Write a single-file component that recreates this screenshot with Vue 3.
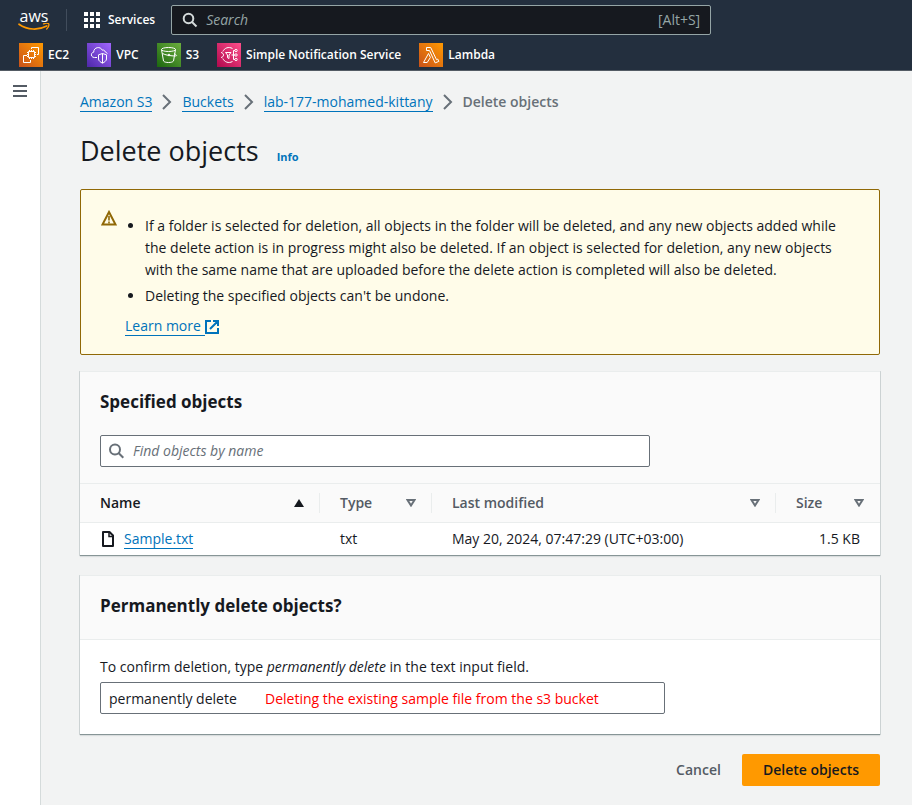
<script setup>
import { ref } from 'vue'

const navQuery = ref('')
const objectQuery = ref('')
const confirmation = ref('permanently delete')

const favorites = [
  { id: 'ec2', label: 'EC2' },
  { id: 'vpc', label: 'VPC' },
  { id: 's3', label: 'S3' },
  { id: 'sns', label: 'Simple Notification Service' },
  { id: 'lambda', label: 'Lambda' },
]

const crumbs = ['Amazon S3', 'Buckets', 'lab-177-mohamed-kittany']

const columns = [
  { id: 'name', label: 'Name', sorted: true },
  { id: 'type', label: 'Type' },
  { id: 'modified', label: 'Last modified' },
  { id: 'size', label: 'Size' },
]

const objects = [
  { name: 'Sample.txt', type: 'txt', modified: 'May 20, 2024, 07:47:29 (UTC+03:00)', size: '1.5 KB' },
]
</script>

<template>
  <div class="page">
    <header class="topnav">
      <div class="topnav-main">
        <a class="logo" href="#" aria-label="AWS home">
          <span class="logo-word">aws</span>
          <svg class="logo-smile" width="32" height="8" viewBox="0 0 32 8" aria-hidden="true">
            <path d="M1 1.2c8.500 6 19.500 6.200 27.800 1.800" fill="none" stroke="#f90" stroke-width="1.700" stroke-linecap="round" />
            <path d="M25.500.9c2-.9 4.600-.8 5.200-.1.400 1-.3 3.600-2 5.200" fill="none" stroke="#f90" stroke-width="1.300" stroke-linecap="round" stroke-linejoin="round" />
          </svg>
        </a>
        <button class="services" type="button">
          <svg width="16" height="16" viewBox="0 0 16 16" fill="#fff" aria-hidden="true">
            <path d="M0 0h4v4H0zM6 0h4v4H6zM12 0h4v4h-4zM0 6h4v4H0zM6 6h4v4H6zM12 6h4v4h-4zM0 12h4v4H0zM6 12h4v4H6zM12 12h4v4h-4z" />
          </svg>
          <span>Services</span>
        </button>
        <label class="nav-search">
          <svg width="16" height="16" viewBox="0 0 16 16" fill="none" stroke="#d5dbdb" stroke-width="2" aria-hidden="true">
            <circle cx="6.500" cy="6.500" r="4.800" />
            <path d="M10 10l4.500 4.500" />
          </svg>
          <input v-model="navQuery" type="search" placeholder="Search" aria-label="Search" />
          <span class="shortcut">[Alt+S]</span>
        </label>
      </div>
      <nav class="favorites" aria-label="Favorites">
        <a v-for="item in favorites" :key="item.id" href="#" class="favorite">
          <span class="tile" :class="'tile-' + item.id">
            <svg width="24" height="24" viewBox="0 0 24 24" fill="none" stroke="#fff" stroke-width="1" aria-hidden="true">
              <template v-if="item.id === 'ec2'">
                <path d="M9.500 8.500h6v6h-6z" />
                <path d="M10.500 8.500V7M12.500 8.500V7M14.500 8.500V7M10.500 14.500V16M12.500 14.500V16M14.500 14.500V16M9.500 9.500H8M9.500 11.500H8M9.500 13.500H8M15.500 9.500H17M15.500 11.500H17M15.500 13.500H17" />
                <path d="M12.500 6V4.500h7v7H18M8 12.500H4.500v7h7V17" />
              </template>
              <template v-else-if="item.id === 'vpc'">
                <path d="M10 14.500H7.500c-4 0-4-5-.8-5.300C6.600 4 13.500 3 15.300 7.200c1.500-.6 2.700.4 2.800 1.700 1.200.2 1.900.9 2.100 1.800" />
                <path d="M15.500 10.500l4 1.300v4.200c0 1.700-2 3.200-4 4.200-2-1-4-2.500-4-4.200v-4.200zM15.500 10.500v9.500" />
              </template>
              <template v-else-if="item.id === 's3'">
                <ellipse cx="11.500" cy="6.500" rx="7" ry="2" />
                <path d="M4.500 6.500l2 11.500c1 2 9 2 10 0l2-11.500M5.500 10.500c3 1.500 6 2 9.500 2.300 3.500.3 5 .2 4.500-.6-.3-.5-1.500-1.200-2.500-1.700" />
                <circle cx="12" cy="12" r=".8" fill="#fff" />
              </template>
              <template v-else-if="item.id === 'sns'">
                <path d="M15.500 5.500C11.500 3.300 7.500 5 5.800 8.500M5.800 15.500c1.700 3.500 5.700 5.200 9.700 3" />
                <path d="M4 9.500c1.500.2 2.500 1.200 2.500 2.500S5.500 14.300 4 14.500M8.500 9.500h5.500l-2 2.500v3.500l-1.500-.8V12zM14.500 12H18M16.500 7.500v9M16.500 7.500H18M16.500 16.500H18" />
                <circle cx="19" cy="7.500" r="1.200" />
                <circle cx="19" cy="12" r="1.200" />
                <circle cx="19" cy="16.500" r="1.200" />
              </template>
              <path v-else d="M7.500 4.500h4.200l5.800 12.200 1.300-.6 1 2.300-3.600 1.500-5.700-12.400H7.500zM9.500 10.500l1.900 3.900-3.200 5.100H4.500z" stroke-linejoin="round" />
            </svg>
          </span>
          <span>{{ item.label }}</span>
        </a>
      </nav>
    </header>

    <div class="body">
      <aside class="rail">
        <button type="button" class="menu-button" aria-label="Open navigation">
          <svg width="14" height="12" viewBox="0 0 14 12" fill="#545b64" aria-hidden="true">
            <path d="M0 0h14v2H0zM0 5h14v2H0zM0 10h14v2H0z" />
          </svg>
        </button>
      </aside>

      <main class="content">
        <nav class="crumbs" aria-label="Breadcrumbs">
          <template v-for="crumb in crumbs" :key="crumb">
            <a class="link" href="#">{{ crumb }}</a>
            <svg width="10" height="16" viewBox="0 0 10 16" fill="none" stroke="#687078" stroke-width="2" aria-hidden="true">
              <path d="M1 1l7 7-7 7" />
            </svg>
          </template>
          <span class="current">Delete objects</span>
        </nav>

        <div class="title">
          <h1>Delete objects</h1>
          <a href="#" class="info">Info</a>
        </div>

        <section class="alert" aria-label="Warning">
          <svg class="alert-icon" width="16" height="16" viewBox="0 0 16 16" fill="none" stroke="#906806" stroke-width="2" aria-hidden="true">
            <path d="M8 2l6.500 12.500h-13z" />
            <path d="M8 6v4.500M8 11.500v2" stroke-width="1.600" />
          </svg>
          <div>
            <ul>
              <li>If a folder is selected for deletion, all objects in the folder will be deleted, and any new objects added while the delete action is in progress might also be deleted. If an object is selected for deletion, any new objects with the same name that are uploaded before the delete action is completed will also be deleted.</li>
              <li>Deleting the specified objects can't be undone.</li>
            </ul>
            <a class="learn" href="#">
              <span class="link">Learn more&nbsp;</span>
              <svg width="14" height="14" viewBox="0 0 14 14" fill="none" stroke="#0073bb" stroke-width="2" aria-hidden="true">
                <path d="M6 1H1v12h12V8M8 1h5v5M13 1L5 9" />
              </svg>
            </a>
          </div>
        </section>

        <section class="card">
          <div class="card-head">
            <h2>Specified objects</h2>
            <label class="filter">
              <svg width="16" height="16" viewBox="0 0 16 16" fill="none" stroke="#687078" stroke-width="2" aria-hidden="true">
                <circle cx="6" cy="6.500" r="5" />
                <path d="M9.500 10l4.800 4.800" />
              </svg>
              <input v-model="objectQuery" type="search" placeholder="Find objects by name" aria-label="Find objects by name" />
            </label>
          </div>
          <table>
            <colgroup>
              <col class="col-name" />
              <col class="col-type" />
              <col class="col-modified" />
              <col class="col-size" />
            </colgroup>
            <thead>
              <tr>
                <th v-for="col in columns" :key="col.id" scope="col" :class="{ sorted: col.sorted }">
                  <div class="th">
                    <span>{{ col.label }}</span>
                    <svg width="10" height="8" viewBox="0 0 10 8" aria-hidden="true">
                      <path v-if="col.sorted" d="M5 0l5 8H0z" fill="#16191f" />
                      <path v-else d="M1.500 1h7L5 6.500z" fill="none" stroke="#687078" stroke-width="2" />
                    </svg>
                  </div>
                </th>
              </tr>
            </thead>
            <tbody>
              <tr v-for="object in objects" :key="object.name">
                <td>
                  <div class="file">
                    <svg width="16" height="16" viewBox="0 0 16 16" fill="none" stroke="#16191f" stroke-width="2" aria-hidden="true">
                      <path d="M3 1h6.500L13 4.500V15H3z" stroke-linejoin="round" />
                      <path d="M9 1v4.500h4" stroke-width="1.500" />
                    </svg>
                    <a class="link" href="#">{{ object.name }}</a>
                  </div>
                </td>
                <td>{{ object.type }}</td>
                <td>{{ object.modified }}</td>
                <td class="num">{{ object.size }}</td>
              </tr>
            </tbody>
          </table>
        </section>

        <section class="card">
          <div class="card-head confirm-head">
            <h2>Permanently delete objects?</h2>
          </div>
          <div class="confirm">
            <label for="confirm-text">To confirm deletion, type <em>permanently delete</em> in the text input field.</label>
            <div class="confirm-field">
              <input id="confirm-text" v-model="confirmation" type="text" />
              <span class="note">Deleting the existing sample file from the s3 bucket</span>
            </div>
          </div>
        </section>

        <div class="actions">
          <button type="button" class="cancel">Cancel</button>
          <button type="button" class="primary">Delete objects</button>
        </div>
      </main>
    </div>
  </div>
</template>

<style>
body {
  background: #f2f3f3;
}
</style>

<style scoped>
.page {
  display: flex;
  flex-direction: column;
  min-height: 100vh;
  font-family: "Open Sans", "Noto Sans", sans-serif;
  font-size: 14px;
  line-height: 22px;
  color: #16191f;
}
.page * {
  box-sizing: border-box;
}
button,
input {
  font: inherit;
  color: inherit;
}
button {
  padding: 0;
  border: 0;
  background: none;
}
a {
  color: #0073bb;
  text-decoration: none;
}
h1,
h2,
ul {
  margin: 0;
  font-weight: 400;
}

.topnav {
  background: #232f3e;
  border-bottom: 1px solid #545b64;
  color: #fff;
}
.topnav-main {
  display: flex;
  align-items: center;
  height: 40px;
  padding-left: 18px;
}
.logo {
  display: flex;
  flex-direction: column;
  align-items: center;
  width: 32px;
  color: #fff;
}
.logo-word {
  font-size: 16px;
  line-height: 14px;
  font-weight: 500;
}
.services {
  display: flex;
  align-items: center;
  gap: 8px;
  height: 22px;
  margin-left: 16px;
  padding-left: 17px;
  border-left: 1px solid #414d5c;
  font-size: 12px;
  font-weight: 600;
}
.nav-search {
  display: flex;
  align-items: center;
  gap: 8px;
  width: 540px;
  height: 30px;
  margin-left: 16px;
  padding: 0 10px;
  background: #16191f;
  border: 1px solid #95a5a6;
  border-radius: 2px;
}
input[type="search"] {
  flex: 1;
  min-width: 0;
  padding: 0;
  border: 0;
  outline: 0;
  background: none;
  appearance: none;
}
input::placeholder {
  font-style: italic;
  color: #687078;
  opacity: 1;
}
.nav-search input::placeholder,
.shortcut {
  color: #95a5a6;
}
.favorites {
  display: flex;
  align-items: center;
  gap: 18px;
  height: 30px;
  padding-left: 19px;
}
.favorite {
  display: flex;
  align-items: center;
  gap: 5px;
  font-size: 12px;
  font-weight: 600;
  color: #fff;
}
.tile {
  display: flex;
}
.tile-ec2,
.tile-lambda {
  background: linear-gradient(45deg, #c8511b, #f90);
}
.tile-vpc {
  background: linear-gradient(45deg, #4d27a8, #a166ff);
}
.tile-s3 {
  background: linear-gradient(45deg, #1b660f, #6cae3e);
}
.tile-sns {
  background: linear-gradient(45deg, #b0084d, #ff4f8b);
}

.body {
  display: flex;
  flex: 1;
}
.rail {
  display: flex;
  justify-content: center;
  align-items: flex-start;
  width: 41px;
  padding-top: 14px;
  background: #fff;
  border-right: 1px solid #d5dbdb;
}
.menu-button svg {
  display: block;
}
.content {
  flex: 1;
  min-width: 0;
  padding: 20px 32px 19px 39px;
}
.crumbs {
  display: flex;
  align-items: center;
  gap: 10px;
}
.link {
  line-height: 18px;
  border-bottom: 1px solid #0073bb;
}
.current {
  font-weight: 600;
  color: #687078;
}
.title {
  display: flex;
  align-items: baseline;
  gap: 18px;
  padding: 20px 0;
}
h1 {
  font-size: 27px;
  line-height: 36px;
}
.info {
  font-size: 11px;
  font-weight: 700;
}
.alert {
  display: flex;
  gap: 8px;
  padding: 20px 24px 17px 20px;
  background: #fffce9;
  border: 1px solid #906806;
  border-radius: 2px;
}
.alert-icon {
  flex: none;
}
.alert ul {
  padding: 5px 0 0 20px;
}
.alert li {
  margin-bottom: 4px;
}
.learn {
  display: inline-flex;
  align-items: center;
  margin-top: 6px;
}
.card {
  margin-top: 16px;
  background: #fff;
  border-top: 1px solid #eaeded;
  border-bottom: 1px solid #879596;
  box-shadow: 0 1px 1px rgba(0, 28, 36, 0.1), 1px 0 0 #d0d6d7, -1px 0 0 #d0d6d7;
}
.card + .card {
  margin-top: 19px;
}
.card-head {
  padding: 18px 20px 16px;
  background: #fafafa;
  border-bottom: 1px solid #eaeded;
}
h2 {
  font-size: 17px;
  line-height: 24px;
  font-weight: 700;
}
.filter {
  display: flex;
  align-items: center;
  gap: 8px;
  max-width: 550px;
  height: 32px;
  margin-top: 21px;
  padding: 0 8px;
  background: #fff;
  border: 1px solid #687078;
  border-radius: 2px;
}
table {
  width: 100%;
  table-layout: fixed;
  border-collapse: separate;
  border-spacing: 0;
}
.col-name {
  width: 30%;
}
.col-type {
  width: 14%;
}
.col-modified {
  width: 43%;
}
.col-size {
  width: 13%;
}
th {
  padding: 9px 0;
  background: #fafafa;
  border-bottom: 1px solid #eaeded;
  font-weight: 600;
  text-align: left;
  color: #545b64;
}
th.sorted {
  color: #16191f;
}
.th {
  display: flex;
  align-items: center;
  justify-content: space-between;
  height: 20px;
  padding: 0 15px 0 20px;
  border-right: 1px solid #eaeded;
}
th:last-child .th {
  border-right-color: transparent;
}
td {
  padding: 5px 20px;
}
.num {
  text-align: right;
}
.file {
  display: flex;
  align-items: center;
  gap: 8px;
}
.confirm-head {
  padding-bottom: 21px;
}
.confirm {
  padding: 16px 20px 20px;
}
.confirm label {
  display: block;
}
.confirm-field {
  position: relative;
  width: calc(75% - 5px);
  margin-top: 4px;
}
.confirm-field input {
  display: block;
  width: 100%;
  height: 32px;
  padding: 0 8px;
  background: #fff;
  border: 1px solid #687078;
  border-radius: 2px;
}
.note {
  position: absolute;
  top: 6px;
  left: 165px;
  color: #f00;
  white-space: nowrap;
}
.actions {
  display: flex;
  justify-content: flex-end;
  gap: 21px;
  margin-top: 19px;
}
.actions button {
  height: 32px;
  font-weight: 600;
}
.cancel {
  color: #545b64;
}
.primary {
  padding: 0 21px;
  background: #f90;
  border-radius: 2px;
}
</style>
